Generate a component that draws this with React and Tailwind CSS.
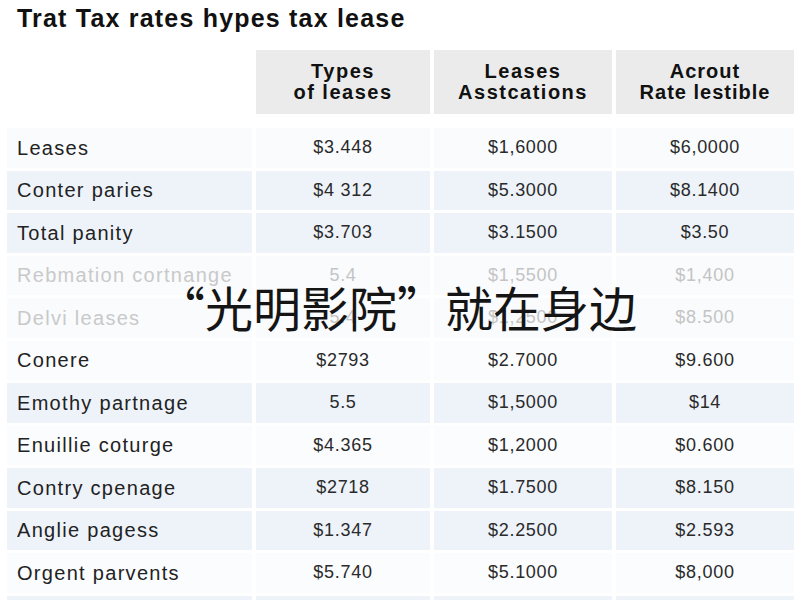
import React from "react";

const rows = [
  { label: "Leases", a: "$3.448", b: "$1,6000", c: "$6,0000", bg: "bg-[#f9fbfd]" },
  { label: "Conter paries", a: "$4 312", b: "$5.3000", c: "$8.1400", bg: "bg-[#eef3fa]" },
  { label: "Total panity", a: "$3.703", b: "$3.1500", c: "$3.50", bg: "bg-[#eef3fa]" },
  { label: "Rebmation cortnange", a: "5.4", b: "$1,5500", c: "$1,400", bg: "bg-[#fafbfd]", faded: true },
  { label: "Delvi leases", a: "5.4", b: "$1,2500", c: "$8.500", bg: "bg-[#f9fbfd]", faded: true },
  { label: "Conere", a: "$2793", b: "$2.7000", c: "$9.600", bg: "bg-[#fbfcfe]" },
  { label: "Emothy partnage", a: "5.5", b: "$1,5000", c: "$14", bg: "bg-[#eef3fa]" },
  { label: "Enuillie coturge", a: "$4.365", b: "$1,2000", c: "$0.600", bg: "bg-[#fbfcfe]" },
  { label: "Contry cpenage", a: "$2718", b: "$1.7500", c: "$8.150", bg: "bg-[#eef3fa]" },
  { label: "Anglie pagess", a: "$1.347", b: "$2.2500", c: "$2.593", bg: "bg-[#eef3fa]" },
  { label: "Orgent parvents", a: "$5.740", b: "$5.1000", c: "$8,000", bg: "bg-[#fbfcfe]" },
  { label: "", a: "", b: "", c: "", bg: "bg-[#eef3fa]" },
];

const Row = ({ row }) => {
  const txt = row.faded ? "text-[#c9c9c9]" : "text-[#222]";
  const num = row.faded ? "text-[#c4c4c4]" : "text-[#2a2a2a]";
  return (
    <div className="flex gap-[4px] h-[39.5px] shrink-0">
      <div className={`w-[245px] ${row.bg} flex items-center pl-[10px] text-[20px] tracking-[1.3px] ${txt}`}>
        {row.label}
      </div>
      <div className={`w-[174px] ${row.bg} flex items-center justify-center text-[18px] tracking-[0.7px] ${num}`}>
        {row.a}
      </div>
      <div className={`w-[178px] ${row.bg} flex items-center justify-center text-[18px] tracking-[0.7px] ${num}`}>
        {row.b}
      </div>
      <div className={`w-[178px] ${row.bg} flex items-center justify-center text-[18px] tracking-[0.7px] ${num}`}>
        {row.c}
      </div>
    </div>
  );
};

export default function App() {
  return (
    <div className="relative w-[800px] h-[600px] overflow-hidden bg-white font-['Liberation_Sans',Arial,sans-serif]">
      <h1 className="pl-[17px] pt-[4px] h-[50px] text-[25px] font-bold tracking-[1.2px] text-[#111] leading-[28px]">
        Trat Tax rates hypes tax lease
      </h1>

      <div className="pl-[7px] flex flex-col">
        <div className="flex gap-[4px] h-[64px]">
          <div className="w-[245px]"></div>
          <div className="w-[174px] bg-[#ebebeb] flex items-center justify-center text-center text-[20px] font-bold tracking-[1.5px] leading-[21px] text-[#111]">
            Types<br />of leases
          </div>
          <div className="w-[178px] bg-[#ebebeb] flex items-center justify-center text-center text-[20px] font-bold tracking-[1.5px] leading-[21px] text-[#111]">
            Leases<br />Asstcations
          </div>
          <div className="w-[178px] bg-[#ebebeb] flex items-center justify-center text-center text-[20px] font-bold tracking-[1px] leading-[21px] text-[#111]">
            Acrout<br />Rate lestible
          </div>
        </div>

        <div className="mt-[14px] flex flex-col gap-[3px]">
          {rows.map((r, i) => (
            <Row key={i} row={r} />
          ))}
        </div>
      </div>

      {/* caption over the table */}
      <div className="absolute left-[157px] top-[278px] text-[48px] leading-[56px] text-[#151515] whitespace-nowrap font-['Noto_Sans_CJK_SC',sans-serif]">
        “光明影院”就在身边
      </div>
    </div>
  );
}
